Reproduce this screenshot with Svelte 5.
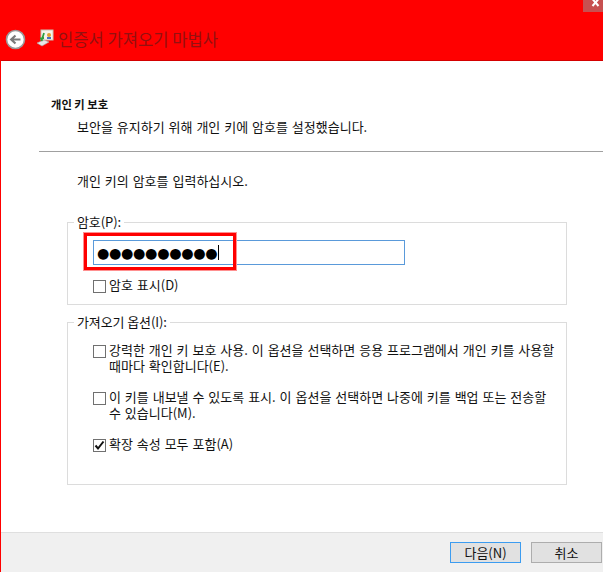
<script>
  const options = [
    { lines: ['강력한 개인 키 보호 사용. 이 옵션을 선택하면 응용 프로그램에서 개인 키를 사용할', '때마다 확인합니다(E).'], checked: false },
    { lines: ['이 키를 내보낼 수 있도록 표시. 이 옵션을 선택하면 나중에 키를 백업 또는 전송할', '수 있습니다(M).'], checked: false },
    { lines: ['확장 속성 모두 포함(A)'], checked: true }
  ];
</script>

{#snippet box(checked)}
  <span class="box">
    {#if checked}
      <svg width="11" height="11" viewBox="0 0 11 11"><path d="M1.5 5.5 L4 8.5 L9.5 1.5" fill="none" stroke="#111" stroke-width="2"/></svg>
    {/if}
  </span>
{/snippet}

<div class="window">
  <header class="head">
    <div class="close-row"><span class="close"><svg width="10" height="7" viewBox="0 0 10 7"><path d="M1.5 -1 L7.5 6 M7.5 -1 L1.5 6" stroke="#fff" stroke-width="2"/></svg></span></div>
    <div class="title-row">
      <svg class="back" width="21" height="21" viewBox="0 0 21 21">
        <circle cx="10.5" cy="10.5" r="9" fill="#fff" stroke="#9a9a9a" stroke-width="1.6"/>
        <path d="M15.5 10.5 H7 M10.5 6.5 L6.2 10.5 L10.5 14.5" fill="none" stroke="#7a7a7a" stroke-width="2.2"/>
      </svg>
      <svg class="wiz" width="18" height="18" viewBox="0 0 18 18">
        <rect x="5" y="1" width="12" height="10" fill="#f6f3ea" stroke="#c9c4b4"/>
        <circle cx="13" cy="6" r="2" fill="#e0a030"/>
        <rect x="11" y="8" width="4" height="2" fill="#4a6fc0"/>
        <path d="M1 14 L8 11 L13 13 L6 17 Z" fill="#e8e8e8" stroke="#aaa" stroke-width=".6"/>
        <path d="M8 4 L5.5 12 M8 9 L4 9.5" stroke="#2f9e3f" stroke-width="1.8" fill="none"/>
      </svg>
      <span class="title">인증서 가져오기 마법사</span>
    </div>
  </header>

  <main class="body">
    <div class="section-head">
      <h1>개인 키 보호</h1>
      <p class="sub">보안을 유지하기 위해 개인 키에 암호를 설정했습니다.</p>
    </div>
    <hr />
    <p class="prompt">개인 키의 암호를 입력하십시오.</p>

    <section class="group pw">
      <span class="legend">암호(P):</span>
      <div class="input-wrap">
        <div class="input"><span class="dots">●●●●●●●●●●</span><span class="caret"></span></div>
        <div class="mark"></div>
      </div>
      <label class="check show">{@render box(false)}<span>암호 표시(D)</span></label>
    </section>

    <section class="group opts">
      <span class="legend">가져오기 옵션(I):</span>
      <div class="opt-list">
        {#each options as o}
          <label class="check">
            {@render box(o.checked)}
            <span class="lines">{#each o.lines as l}<span>{l}</span>{/each}</span>
          </label>
        {/each}
      </div>
    </section>
  </main>

  <footer class="foot">
    <button class="primary">다음(N)</button>
    <button>취소</button>
  </footer>
</div>

<style>
  :global(body) { margin: 0; background: #fff; }
  .window {
    width: 603px; height: 572px; box-sizing: border-box; overflow: hidden;
    display: flex; flex-direction: column;
    font-family: "Noto Sans CJK KR", "Noto Sans", sans-serif;
    font-size: 13px; line-height: 15px; color: #111; word-spacing: 1px;
    border-left: 1px solid #f00; background: #fff;
  }
  .head { height: 61px; flex: none; background: #f00; box-sizing: border-box; border-bottom: 1px solid #d40000; margin-left: -1px; }
  .close-row { display: flex; justify-content: flex-end; height: 12px; }
  .close { width: 20px; height: 12px; background: #c75050; display: flex; justify-content: center; align-items: flex-start; overflow: hidden; }
  .close svg { margin-left: 5px; }
  .title-row { display: flex; align-items: center; height: 38px; margin-top: 8px; padding-left: 5px; }
  .back { flex: none; }
  .wiz { flex: none; margin-left: 10px; margin-bottom: 3px; }
  .title { margin-left: 4px; font-size: 16.6px; line-height: 20px; color: #941010; word-spacing: 0; }
  .body { flex: 1; min-height: 0; display: flex; flex-direction: column; }
  .section-head { padding: 36px 0 0 50px; }
  h1 { margin: 0; font-size: 11.3px; line-height: 15px; font-weight: 700; word-spacing: 0; }
  .sub { margin: 7px 0 0 26px; }
  hr { margin: 17px 0 0 38px; border: 0; border-top: 1px solid #a0a0a0; }
  .prompt { margin: 21px 0 0 76px; }
  .group { margin: 0 36px 0 66px; border: 1px solid #dcdcdc; position: relative; box-sizing: border-box; }
  .legend { position: absolute; left: 6px; top: -9px; padding: 0 3px; background: #fff; word-spacing: 0; letter-spacing: -0.1px; }
  .pw { margin-top: 34px; height: 83px; }
  .input-wrap { position: relative; margin: 17px 0 0 25px; width: 312px; }
  .input { box-sizing: border-box; height: 25px; border: 1px solid #5a9ada; display: flex; align-items: center; padding-left: 3px; background: #fff; }
  .dots { font-family: "DejaVu Sans", sans-serif; font-size: 14.2px; letter-spacing: -0.35px; line-height: 20px; color: #000; }
  .caret { width: 1px; height: 15px; background: #000; margin-left: 1px; }
  .mark { position: absolute; left: -9px; top: -7px; width: 152px; height: 37px; box-sizing: border-box; border: 3px solid #f00; box-shadow: 0 0 0 1px #ff9090; }
  .check { display: flex; align-items: flex-start; gap: 3px; margin-left: 25px; white-space: nowrap; }
  .show { margin-top: 12px; }
  .box { flex: none; width: 13px; height: 13px; box-sizing: border-box; border: 1px solid #707070; background: #fff; display: flex; align-items: center; justify-content: center; margin-top: 3px; }
  .lines { display: flex; flex-direction: column; line-height: 16px; }
  .opts { margin-top: 17px; height: 163px; }
  .opt-list { display: flex; flex-direction: column; gap: 15px; padding-top: 19px; }
  .foot {
    flex: none; height: 40px; box-sizing: border-box; background: #f0f0f0; border-top: 1px solid #dfdfdf;
    display: flex; justify-content: flex-end; gap: 10px; padding: 9px 1px 0 0; margin-left: -1px;
  }
  button {
    width: 71px; height: 21px; box-sizing: border-box; padding: 0; font: inherit; color: #111;
    background: #e1e1e1; border: 1px solid #adadad;
  }
  .primary { border-color: #3c9cf0; }
</style>
